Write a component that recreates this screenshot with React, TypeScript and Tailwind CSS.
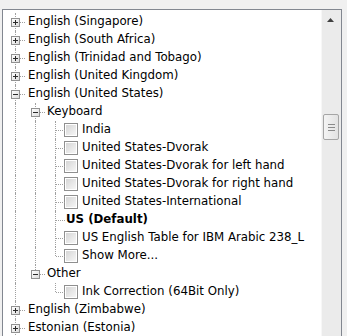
import React from "react";

type Guide = "line" | "none";
type Conn = "tee" | "end";
type Mark = "plus" | "minus" | "check" | "bold";

type Row = { guides: Guide[]; conn: Conn; mark: Mark; text: string };

const rows: Row[] = [
  { guides: [], conn: "tee", mark: "plus", text: "English (Singapore)" },
  { guides: [], conn: "tee", mark: "plus", text: "English (South Africa)" },
  { guides: [], conn: "tee", mark: "plus", text: "English (Trinidad and Tobago)" },
  { guides: [], conn: "tee", mark: "plus", text: "English (United Kingdom)" },
  { guides: [], conn: "tee", mark: "minus", text: "English (United States)" },
  { guides: ["line"], conn: "tee", mark: "minus", text: "Keyboard" },
  { guides: ["line", "line"], conn: "tee", mark: "check", text: "India" },
  { guides: ["line", "line"], conn: "tee", mark: "check", text: "United States-Dvorak" },
  { guides: ["line", "line"], conn: "tee", mark: "check", text: "United States-Dvorak for left hand" },
  { guides: ["line", "line"], conn: "tee", mark: "check", text: "United States-Dvorak for right hand" },
  { guides: ["line", "line"], conn: "tee", mark: "check", text: "United States-International" },
  { guides: ["line", "line"], conn: "tee", mark: "bold", text: "US (Default)" },
  { guides: ["line", "line"], conn: "tee", mark: "check", text: "US English Table for IBM Arabic 238_L" },
  { guides: ["line", "line"], conn: "end", mark: "check", text: "Show More..." },
  { guides: ["line"], conn: "end", mark: "minus", text: "Other" },
  { guides: ["line", "none"], conn: "end", mark: "check", text: "Ink Correction (64Bit Only)" },
  { guides: [], conn: "tee", mark: "plus", text: "English (Zimbabwe)" },
  { guides: [], conn: "tee", mark: "plus", text: "Estonian (Estonia)" },
];

function Expander({ open }: { open: boolean }) {
  return (
    <div className="relative z-10 ml-[6px] flex h-[9px] w-[9px] items-center justify-center border border-[#919191] bg-gradient-to-br from-white to-[#dcdcdc]">
      <div className="absolute h-px w-[5px] bg-[#2b2b2b]" />
      {!open && <div className="absolute h-[5px] w-px bg-[#2b2b2b]" />}
    </div>
  );
}

function Checkbox() {
  return (
    <div className="-ml-px flex h-[14px] w-[14px] shrink-0 items-center justify-center border border-[#8f8f8f] bg-white">
      <div className="h-[10px] w-[10px] bg-gradient-to-br from-[#d6d6d6] to-[#f6f6f6]" />
    </div>
  );
}

function TreeRow({ row }: { row: Row }) {
  const expander = row.mark === "plus" || row.mark === "minus";
  return (
    <div className="flex h-[18px] items-center whitespace-nowrap">
      {row.guides.map((g, i) => (
        <div key={i} className="relative h-full w-[20px] shrink-0">
          {g === "line" && (
            <div className="absolute bottom-0 left-[10px] top-0 border-l border-dotted border-[#a0a0a0]" />
          )}
        </div>
      ))}
      <div className="relative flex h-full w-[20px] shrink-0 items-center">
        <div
          className={
            row.conn === "tee"
              ? "absolute bottom-0 left-[10px] top-0 border-l border-dotted border-[#a0a0a0]"
              : "absolute left-[10px] top-0 h-[9px] border-l border-dotted border-[#a0a0a0]"
          }
        />
        <div className="absolute left-[11px] right-0 top-[9px] border-t border-dotted border-[#a0a0a0]" />
        {expander && <Expander open={row.mark === "minus"} />}
      </div>
      {row.mark === "check" && <Checkbox />}
      <span
        className={
          row.mark === "check"
            ? "ml-[4px]"
            : row.mark === "bold"
            ? "ml-px font-bold"
            : row.guides.length === 0
            ? "ml-[3px]"
            : "ml-[2px]"
        }
      >
        {row.text}
      </span>
    </div>
  );
}

export default function App() {
  return (
    <div className="h-[336px] w-[347px] overflow-hidden bg-[#f0f0f0] pl-[2px] pr-[5px] pt-[9px] font-['DejaVu_Sans',sans-serif] text-[11.8px] text-black">
      <div className="flex h-[360px] border border-[#828790] bg-white">
        <div className="flex-1 overflow-hidden pl-[2px] pt-[3px]">
          {rows.map((r, i) => (
            <TreeRow key={i} row={r} />
          ))}
        </div>
        <div className="flex w-[20px] shrink-0 flex-col border-l border-[#f7f7f7] bg-[#ebebeb]">
          <div className="flex h-[17px] w-[17px] items-center justify-center pt-[3px]">
            <svg width="7" height="4" viewBox="0 0 7 4">
              <path d="M3.5 0 L7 4 L0 4 Z" fill="#404040" />
            </svg>
          </div>
          <div className="h-[87px]" />
          <div className="ml-px flex h-[26px] w-[16px] flex-col items-center justify-center gap-[2px] rounded-[2px] border border-[#a5a5a5] bg-gradient-to-r from-[#f4f4f4] to-[#e2e2e2]">
            <div className="h-px w-[7px] bg-[#8a8a8a]" />
            <div className="h-px w-[7px] bg-[#8a8a8a]" />
            <div className="h-px w-[7px] bg-[#8a8a8a]" />
          </div>
        </div>
      </div>
    </div>
  );
}
